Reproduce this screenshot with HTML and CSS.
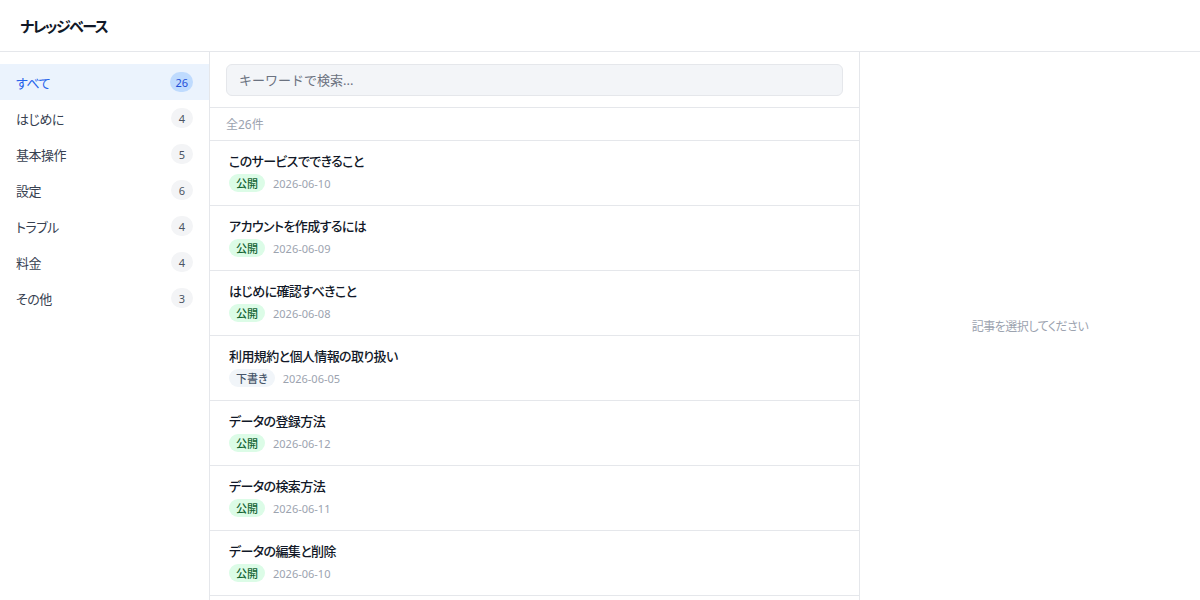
FILE: index.html
```html
<!DOCTYPE html>
<html lang="ja">
<head>
    <meta charset="utf-8">
    <title>ナレッジベース</title>
    <link rel="stylesheet" href="styles.css">
</head>
<body>
    <header class="app-header">
        <h1>ナレッジベース</h1>
    </header>

    <div class="layout">
        <nav class="sidebar">
            <a class="category active">すべて<span class="count">26</span></a>
            <a class="category">はじめに<span class="count">4</span></a>
            <a class="category">基本操作<span class="count">5</span></a>
            <a class="category">設定<span class="count">6</span></a>
            <a class="category">トラブル<span class="count">4</span></a>
            <a class="category">料金<span class="count">4</span></a>
            <a class="category">その他<span class="count">3</span></a>
        </nav>

        <section class="article-list">
            <div class="search-bar">
                <input type="text" class="search-input" placeholder="キーワードで検索...">
            </div>
            <div class="result-count">全26件</div>
            <ul class="articles">
                <li class="article">
                    <div class="article-title">このサービスでできること</div>
                    <div class="article-meta"><span class="status public">公開</span><span class="date">2026-06-10</span></div>
                </li>
                <li class="article">
                    <div class="article-title">アカウントを作成するには</div>
                    <div class="article-meta"><span class="status public">公開</span><span class="date">2026-06-09</span></div>
                </li>
                <li class="article">
                    <div class="article-title">はじめに確認すべきこと</div>
                    <div class="article-meta"><span class="status public">公開</span><span class="date">2026-06-08</span></div>
                </li>
                <li class="article">
                    <div class="article-title">利用規約と個人情報の取り扱い</div>
                    <div class="article-meta"><span class="status draft">下書き</span><span class="date">2026-06-05</span></div>
                </li>
                <li class="article">
                    <div class="article-title">データの登録方法</div>
                    <div class="article-meta"><span class="status public">公開</span><span class="date">2026-06-12</span></div>
                </li>
                <li class="article">
                    <div class="article-title">データの検索方法</div>
                    <div class="article-meta"><span class="status public">公開</span><span class="date">2026-06-11</span></div>
                </li>
                <li class="article">
                    <div class="article-title">データの編集と削除</div>
                    <div class="article-meta"><span class="status public">公開</span><span class="date">2026-06-10</span></div>
                </li>
            </ul>
        </section>

        <section class="detail">
            <p class="empty">記事を選択してください</p>
        </section>
    </div>
</body>
</html>
```

FILE: styles.css
```css
* {
    box-sizing: border-box;
}

html, body {
    margin: 0;
    height: 100%;
}

body {
    font-family: "Noto Sans", "Noto Sans CJK JP", sans-serif;
    font-feature-settings: "palt";
    color: #1f2937;
    background: #fff;
    display: flex;
    flex-direction: column;
    overflow: hidden;
}

.app-header {
    height: 52px;
    padding: 0 20px;
    display: flex;
    align-items: center;
    border-bottom: 1px solid #e5e7eb;
    flex-shrink: 0;
}

.app-header h1 {
    margin: 0;
    font-size: 15px;
    font-weight: 700;
    letter-spacing: -1.5px;
    color: #111827;
}

.layout {
    flex: 1;
    display: flex;
    min-height: 0;
}

/* left column: categories */
.sidebar {
    width: 210px;
    flex-shrink: 0;
    border-right: 1px solid #e5e7eb;
    padding-top: 12px;
}

.category {
    height: 36px;
    padding: 0 16px;
    display: flex;
    align-items: center;
    justify-content: space-between;
    font-size: 13px;
    letter-spacing: -0.5px;
    color: #374151;
    cursor: pointer;
}

.category.active {
    background: #ebf3fd;
    color: #2563eb;
}

.count {
    min-width: 22px;
    height: 20px;
    padding: 0 5px;
    border-radius: 10px;
    background: #f3f4f6;
    color: #4b5563;
    font-size: 11px;
    letter-spacing: 0;
    display: flex;
    align-items: center;
    justify-content: center;
}

.category.active .count {
    background: #bfdbfe;
    color: #1d4ed8;
}

/* middle column: search + articles */
.article-list {
    width: 650px;
    flex-shrink: 0;
    border-right: 1px solid #e5e7eb;
    overflow: hidden;
}

.search-bar {
    padding: 12px 16px 11px;
    border-bottom: 1px solid #e5e7eb;
}

.search-input {
    display: block;
    width: 100%;
    height: 32px;
    padding: 0 12px;
    border: 1px solid #e5e7eb;
    border-radius: 6px;
    background: #f3f5f8;
    font-family: inherit;
    font-size: 13px;
    color: #374151;
    outline: none;
}

.search-input::placeholder {
    color: #6b7280;
}

.result-count {
    height: 33px;
    padding: 0 16px;
    display: flex;
    align-items: center;
    font-size: 12px;
    color: #9ca3af;
    border-bottom: 1px solid #e5e7eb;
}

.articles {
    list-style: none;
    margin: 0;
    padding: 0;
}

.article {
    height: 65px;
    padding: 10px 19px 0;
    border-bottom: 1px solid #e5e7eb;
    cursor: pointer;
}

.article-title {
    font-size: 13px;
    font-weight: 500;
    letter-spacing: -0.6px;
    color: #111827;
    line-height: 20px;
}

.article-meta {
    margin-top: 3px;
    display: flex;
    align-items: center;
    gap: 8px;
}

.status {
    height: 18px;
    padding: 0 7px;
    border-radius: 9px;
    font-size: 11px;
    font-weight: 500;
    display: flex;
    align-items: center;
}

.status.public {
    background: #dcfce7;
    color: #166534;
}

.status.draft {
    background: #f1f5f9;
    color: #475569;
}

.date {
    font-size: 11px;
    color: #9ca3af;
}

/* right column: article detail */
.detail {
    flex: 1;
    display: flex;
    align-items: center;
    justify-content: center;
}

.empty {
    margin: 0;
    font-size: 12px;
    letter-spacing: -0.5px;
    color: #9ca3af;
}
```
